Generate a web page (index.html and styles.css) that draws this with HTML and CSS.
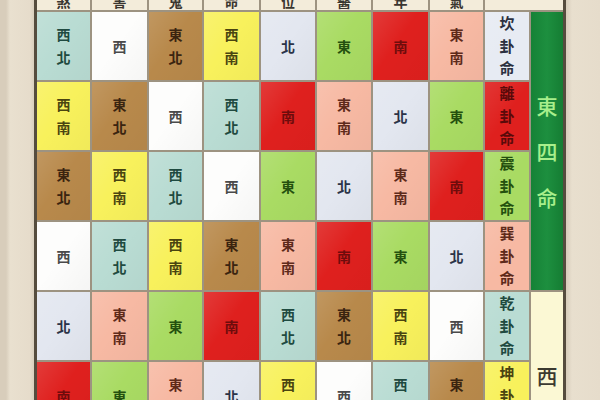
FILE: index.html
```html
<!DOCTYPE html>
<html lang="zh-Hant">
<head>
<meta charset="utf-8">
<title>八宅命卦方位表</title>
<link rel="stylesheet" href="styles.css">
</head>
<body>
<div class="page">
  <div class="margin left"></div>
  <div class="frame">
    <div class="chart">
      <div class="group east"><span>東</span><span>四</span><span>命</span></div>
      <div class="group west"><span>西</span><span>四</span><span>命</span></div>

      <div class="hd"><span>煞</span></div>
      <div class="hd"><span>害</span></div>
      <div class="hd"><span>鬼</span></div>
      <div class="hd"><span>命</span></div>
      <div class="hd"><span>位</span></div>
      <div class="hd"><span>醫</span></div>
      <div class="hd"><span>年</span></div>
      <div class="hd"><span>氣</span></div>
      <div class="hd wide"></div>

      <!-- 坎 -->
      <div class="c nw"><span>西</span><span>北</span></div>
      <div class="c w"><span>西</span></div>
      <div class="c ne"><span>東</span><span>北</span></div>
      <div class="c sw"><span>西</span><span>南</span></div>
      <div class="c n"><span>北</span></div>
      <div class="c e"><span>東</span></div>
      <div class="c s"><span>南</span></div>
      <div class="c se"><span>東</span><span>南</span></div>
      <div class="lb n"><span>坎</span><span>卦</span><span>命</span></div>

      <!-- 離 -->
      <div class="c sw"><span>西</span><span>南</span></div>
      <div class="c ne"><span>東</span><span>北</span></div>
      <div class="c w"><span>西</span></div>
      <div class="c nw"><span>西</span><span>北</span></div>
      <div class="c s"><span>南</span></div>
      <div class="c se"><span>東</span><span>南</span></div>
      <div class="c n"><span>北</span></div>
      <div class="c e"><span>東</span></div>
      <div class="lb s"><span>離</span><span>卦</span><span>命</span></div>

      <!-- 震 -->
      <div class="c ne"><span>東</span><span>北</span></div>
      <div class="c sw"><span>西</span><span>南</span></div>
      <div class="c nw"><span>西</span><span>北</span></div>
      <div class="c w"><span>西</span></div>
      <div class="c e"><span>東</span></div>
      <div class="c n"><span>北</span></div>
      <div class="c se"><span>東</span><span>南</span></div>
      <div class="c s"><span>南</span></div>
      <div class="lb e"><span>震</span><span>卦</span><span>命</span></div>

      <!-- 巽 -->
      <div class="c w"><span>西</span></div>
      <div class="c nw"><span>西</span><span>北</span></div>
      <div class="c sw"><span>西</span><span>南</span></div>
      <div class="c ne"><span>東</span><span>北</span></div>
      <div class="c se"><span>東</span><span>南</span></div>
      <div class="c s"><span>南</span></div>
      <div class="c e"><span>東</span></div>
      <div class="c n"><span>北</span></div>
      <div class="lb se"><span>巽</span><span>卦</span><span>命</span></div>

      <!-- 乾 -->
      <div class="c n"><span>北</span></div>
      <div class="c se"><span>東</span><span>南</span></div>
      <div class="c e"><span>東</span></div>
      <div class="c s"><span>南</span></div>
      <div class="c nw"><span>西</span><span>北</span></div>
      <div class="c ne"><span>東</span><span>北</span></div>
      <div class="c sw"><span>西</span><span>南</span></div>
      <div class="c w"><span>西</span></div>
      <div class="lb nw"><span>乾</span><span>卦</span><span>命</span></div>

      <!-- 坤 -->
      <div class="c s"><span>南</span></div>
      <div class="c e"><span>東</span></div>
      <div class="c se"><span>東</span><span>南</span></div>
      <div class="c n"><span>北</span></div>
      <div class="c sw"><span>西</span><span>南</span></div>
      <div class="c w"><span>西</span></div>
      <div class="c nw"><span>西</span><span>北</span></div>
      <div class="c ne"><span>東</span><span>北</span></div>
      <div class="lb sw"><span>坤</span><span>卦</span><span>命</span></div>

      <!-- 艮 -->
      <div class="c e"><span>東</span></div>
      <div class="c s"><span>南</span></div>
      <div class="c n"><span>北</span></div>
      <div class="c se"><span>東</span><span>南</span></div>
      <div class="c ne"><span>東</span><span>北</span></div>
      <div class="c nw"><span>西</span><span>北</span></div>
      <div class="c w"><span>西</span></div>
      <div class="c sw"><span>西</span><span>南</span></div>
      <div class="lb ne"><span>艮</span><span>卦</span><span>命</span></div>

      <!-- 兌 -->
      <div class="c se"><span>東</span><span>南</span></div>
      <div class="c n"><span>北</span></div>
      <div class="c s"><span>南</span></div>
      <div class="c e"><span>東</span></div>
      <div class="c w"><span>西</span></div>
      <div class="c sw"><span>西</span><span>南</span></div>
      <div class="c ne"><span>東</span><span>北</span></div>
      <div class="c nw"><span>西</span><span>北</span></div>
      <div class="lb w"><span>兌</span><span>卦</span><span>命</span></div>
    </div>
  </div>
  <div class="margin right"></div>
</div>
</body>
</html>
```
FILE: styles.css
```css
html, body {
  margin: 0;
  padding: 0;
  width: 600px;
  height: 400px;
  overflow: hidden;
  background: #e6dccb;
  font-family: "Noto Sans CJK TC", "Noto Sans CJK SC", sans-serif;
}

.page {
  display: flex;
  height: 400px;
  overflow: hidden;
}

.margin {
  width: 34px;
  flex: none;
  background: #e7ddcc;
}
.margin.left {
  background: linear-gradient(90deg, #d8cdbb 0, #d8cdbb 6px, #e9e0cf 10px, #e6dccb 30px, #d9cfbd 34px);
}
.margin.right {
  background: linear-gradient(90deg, #d6ccba 0, #e8dfce 6px, #e6dccb 100%);
}

.frame {
  flex: none;
  border-left: 3px solid #554c3e;
  border-right: 3px solid #554c3e;
  background: #9d9381;
  align-self: flex-start;
}

.chart {
  display: grid;
  grid-template-columns: 53px 55px 53px 55px 54px 54px 55px 53px 44px 32px;
  grid-template-rows: 10px repeat(8, 68px);
  gap: 2px;
  background: #9d9381;
}

.hd {
  background: #f3ecda;
  display: flex;
  justify-content: center;
  align-items: flex-end;
  overflow: hidden;
}
.hd span {
  font-size: 14px;
  line-height: 14px;
  font-weight: 700;
  color: #3a3630;
  margin-bottom: 2px;
}
.hd.wide {
  grid-column: 9 / span 2;
}

.c, .lb {
  display: flex;
  flex-direction: column;
  justify-content: center;
  align-items: center;
  font-weight: 700;
}
.c {
  font-size: 14px;
  line-height: 23px;
  background-image: linear-gradient(125deg, rgba(255,255,255,0.12) 0%, rgba(255,255,255,0) 45%, rgba(0,0,0,0.03) 100%);
}
.lb {
  font-size: 15px;
  line-height: 22.5px;
  background-image: linear-gradient(125deg, rgba(255,255,255,0.1) 0%, rgba(255,255,255,0) 50%);
}

.nw { background-color: #b9dcd3; color: #1f4a40; }
.w  { background-color: #fdfdfc; color: #4a4a4a; }
.ne { background-color: #b8894b; color: #3a2410; }
.sw { background-color: #f8f15c; color: #4a4410; }
.n  { background-color: #e3e7f0; color: #2b3348; }
.e  { background-color: #a9db63; color: #24500e; }
.s  { background-color: #df201e; color: #6e0c0c; }
.se { background-color: #f7b9a3; color: #5e2a1a; }

.lb.n { background-color: #e7ebf3; color: #2b3040; }
.lb.s { color: #5a0a0a; }

.group {
  grid-column: 10;
  display: flex;
  flex-direction: column;
  justify-content: center;
  align-items: center;
  font-size: 21px;
  font-weight: 500;
}
.group.east {
  grid-row: 2 / span 4;
  background: linear-gradient(90deg, #168236 0%, #1d8f3f 50%, #157d33 100%);
  color: #a8ef8c;
  line-height: 46px;
}
.group.west {
  grid-row: 6 / span 4;
  background: #fbf8d4;
  color: #3b3a30;
  line-height: 56px;
}
```
